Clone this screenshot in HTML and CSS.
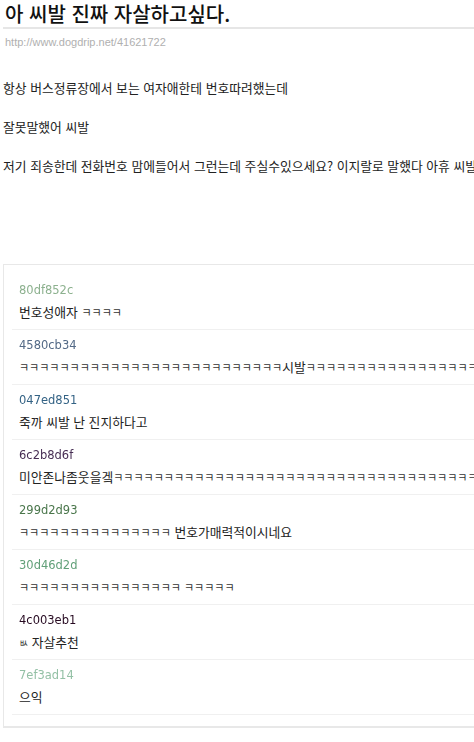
FILE: index.html
```html
<!DOCTYPE html>
<html lang="ko">
<head>
    <meta charset="UTF-8">
    <meta name="viewport" content="width=device-width, initial-scale=1.0">
    <title>아 씨발 진짜 자살하고싶다.</title>
    <link rel="stylesheet" href="styles.css">
</head>
<body>
    <div class="page">
        <h1 class="title">아 씨발 진짜 자살하고싶다.</h1>
        <div class="url">http://www.dogdrip.net/41621722</div>

        <!-- 본문 -->
        <div class="post">
            <p>항상 버스정류장에서 보는 여자애한테 번호따려했는데</p>
            <p>잘못말했어 씨발</p>
            <p>저기 죄송한데 전화번호 맘에들어서 그런는데 주실수있으세요? 이지랄로 말했다 아휴 씨발</p>
        </div>

        <!-- 댓글 -->
        <div class="comments">
            <div class="comment">
                <div class="cid" style="color: #80df85;">80df852c</div>
                <div class="ctext">번호성애자 <span class="jamo">ㅋㅋㅋㅋ</span></div>
            </div>
            <div class="comment">
                <div class="cid" style="color: #4580cb;">4580cb34</div>
                <div class="ctext"><span class="jamo">ㅋㅋㅋㅋㅋㅋㅋㅋㅋㅋㅋㅋㅋㅋㅋㅋㅋㅋㅋㅋㅋㅋㅋㅋㅋㅋ</span>시발<span class="jamo">ㅋㅋㅋㅋㅋㅋㅋㅋㅋㅋㅋㅋㅋㅋㅋㅋㅋㅋㅋㅋ</span></div>
            </div>
            <div class="comment">
                <div class="cid" style="color: #047ed8;">047ed851</div>
                <div class="ctext">죽까 씨발 난 진지하다고</div>
            </div>
            <div class="comment">
                <div class="cid" style="color: #6c2b8d;">6c2b8d6f</div>
                <div class="ctext">미안존나좀웃을겤<span class="jamo">ㅋㅋㅋㅋㅋㅋㅋㅋㅋㅋㅋㅋㅋㅋㅋㅋㅋㅋㅋㅋㅋㅋㅋㅋㅋㅋㅋㅋㅋㅋㅋㅋㅋㅋㅋㅋㅋㅋ</span></div>
            </div>
            <div class="comment">
                <div class="cid" style="color: #299d2d;">299d2d93</div>
                <div class="ctext"><span class="jamo">ㅋㅋㅋㅋㅋㅋㅋㅋㅋㅋㅋㅋㅋㅋㅋ</span> 번호가매력적이시네요</div>
            </div>
            <div class="comment">
                <div class="cid" style="color: #30d46d;">30d46d2d</div>
                <div class="ctext"><span class="jamo">ㅋㅋㅋㅋㅋㅋㅋㅋㅋㅋㅋㅋㅋㅋㅋㅋ ㅋㅋㅋㅋㅋ</span></div>
            </div>
            <div class="comment">
                <div class="cid" style="color: #4c003e;">4c003eb1</div>
                <div class="ctext"><span class="jamo small">ㅄ</span> 자살추천</div>
            </div>
            <div class="comment">
                <div class="cid" style="color: #7ef3ad;">7ef3ad14</div>
                <div class="ctext">으익</div>
            </div>
        </div>
    </div>
</body>
</html>
```

FILE: styles.css
```css
html, body {
    margin: 0;
    padding: 0;
    background-color: #fff;
    overflow: hidden;
}

body {
    font-family: "Noto Sans CJK KR", "Liberation Sans", sans-serif;
    color: #222;
}

.page {
    width: 720px;
    padding: 0 3px;
}

.title {
    margin: 0;
    padding: 1px 2px 0;
    font-size: 20px;
    font-weight: 500;
    line-height: 26px;
    color: #111;
    border-bottom: 2px solid #e6e6e6;
}

.url {
    margin-top: 5px;
    padding-left: 2px;
    font-family: "Liberation Sans", Arial, sans-serif;
    font-size: 11px;
    line-height: 16px;
    color: #b0b0b0;
}

.post {
    padding-top: 9px;
}

.post p {
    margin: 19px 0 0;
    font-size: 12.8px;
    line-height: 20px;
    white-space: nowrap;
}

.comments {
    margin-top: 88px;
    padding: 10px 0 11px 8px;
    border: 1px solid #e8e8e8;
    border-bottom-width: 2px;
}

.comment {
    padding: 6px 0 7px 7px;
    border-bottom: 1px solid #f0f0f0;
}

.cid {
    font-family: "DejaVu Sans", Verdana, sans-serif;
    font-size: 11.5px;
    line-height: 18px;
    margin-bottom: 3px;
    filter: saturate(0.45) brightness(0.85);
}

.ctext {
    height: 20px;
    font-size: 12.8px;
    line-height: 20px;
    white-space: nowrap;
}

.jamo {
    font-size: 11px;
    line-height: 1;
    color: #333;
}

.jamo.small {
    font-size: 10px;
    color: #444;
}
```
